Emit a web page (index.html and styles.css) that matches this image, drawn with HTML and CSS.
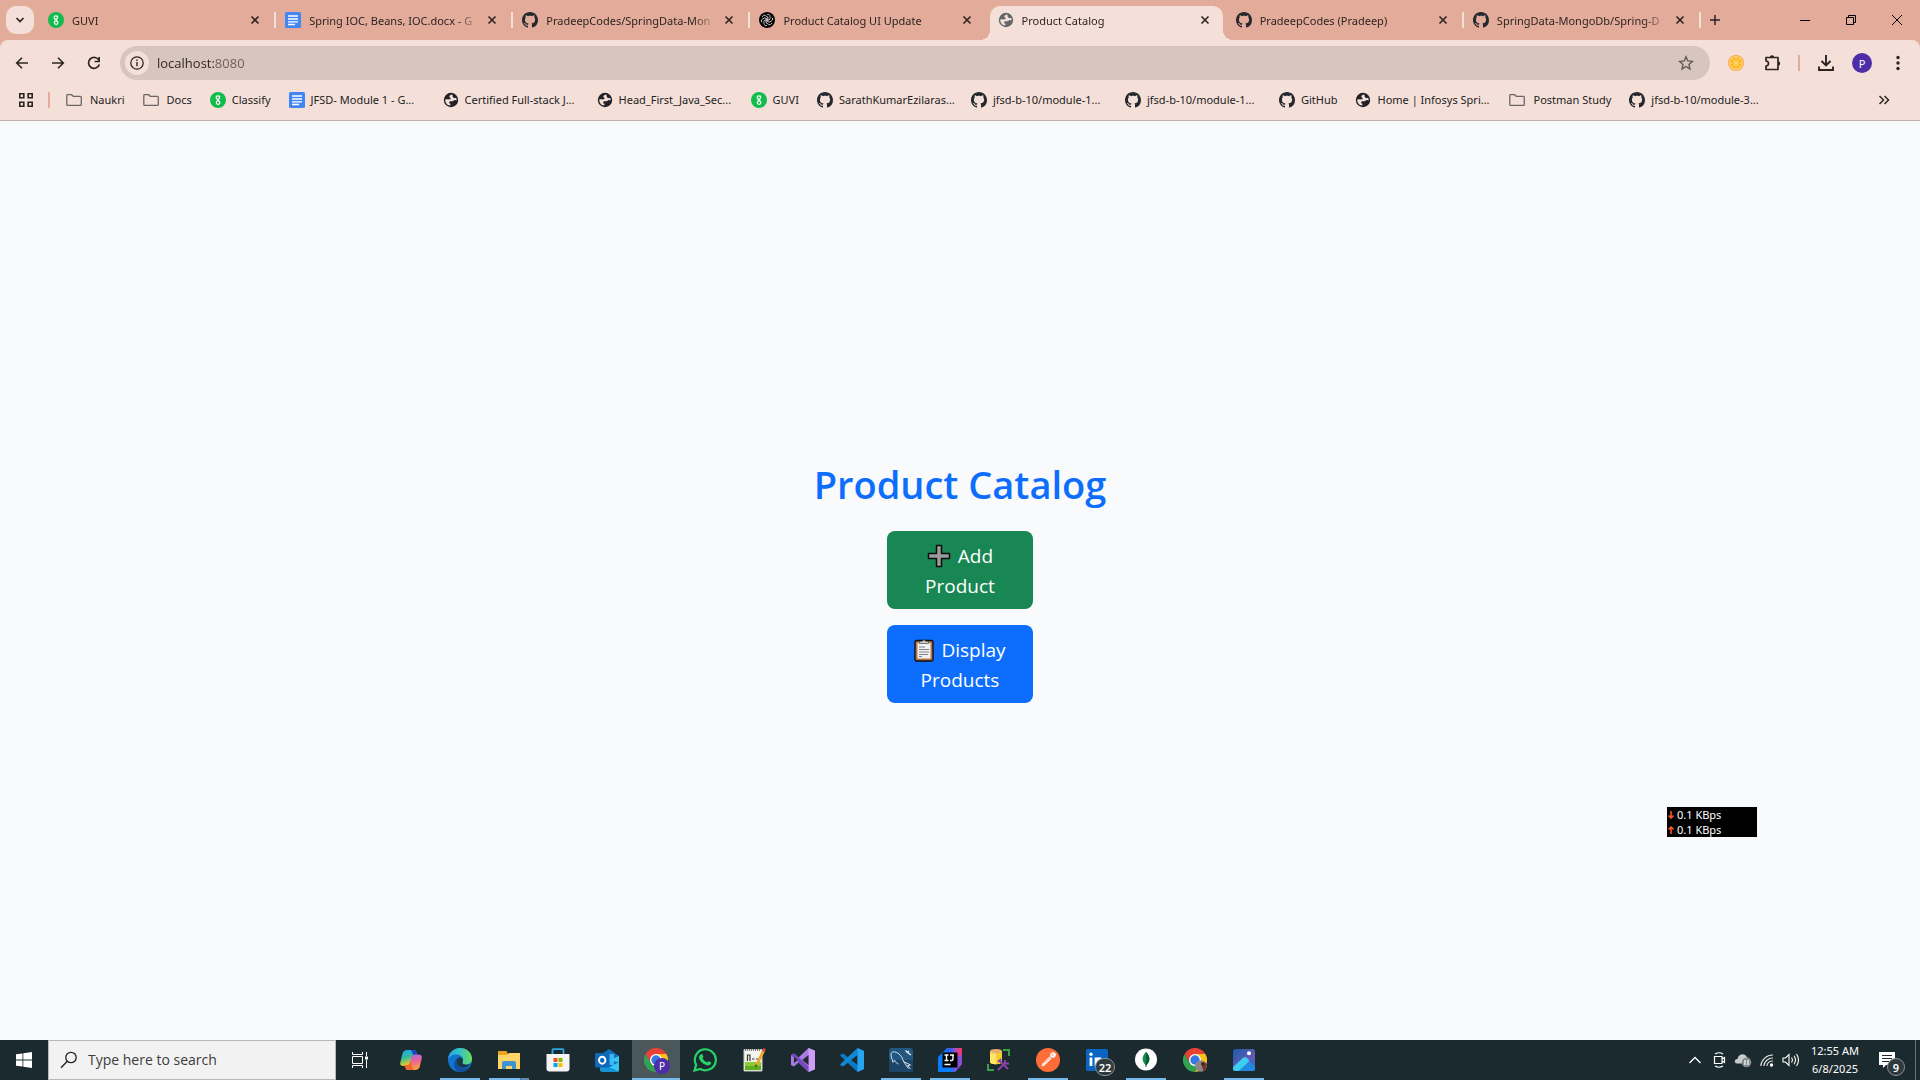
FILE: index.html
```html
<!DOCTYPE html>
<html lang="en">
<head>
<meta charset="utf-8">
<title>Product Catalog</title>
<link rel="stylesheet" href="styles.css">
</head>
<body>
<svg class="sprite" aria-hidden="true">
  <symbol id="guvi" viewBox="0 0 16 16"><circle cx="8" cy="8" r="8" fill="#11bb4c"/><g fill="none" stroke="#fff" stroke-width="1.2"><circle cx="7.8" cy="5.6" r="1.7"/><circle cx="8.1" cy="10.6" r="1.8"/><path d="M9.2 4.6l1.1-.7M7.2 7.2L9 8.9"/></g></symbol>
  <symbol id="doc" viewBox="0 0 16 16"><rect width="16" height="16" rx="1.5" fill="#4285f4"/><path d="M3 4h10M3 7h10M3 9.900h10M3 12.500h7" stroke="#fff" stroke-width="1.400"/></symbol>
  <symbol id="github" viewBox="0 0 16 16"><path fill="#24292f" d="M8 0C3.58 0 0 3.58 0 8c0 3.54 2.29 6.53 5.47 7.59.4.07.55-.17.55-.38 0-.19-.01-.82-.01-1.49-2.01.37-2.53-.49-2.69-.94-.09-.23-.48-.94-.82-1.130-.28-.15-.68-.52-.01-.53.63-.01 1.08.58 1.230.82.72 1.210 1.870.87 2.330.66.07-.52.28-.87.51-1.070-1.780-.2-3.640-.89-3.640-3.950 0-.87.31-1.590.82-2.150-.08-.2-.36-1.020.08-2.120 0 0 .67-.21 2.200.82.64-.18 1.320-.27 2-.27s1.360.09 2 .27c1.530-1.040 2.200-.82 2.200-.82.44 1.100.16 1.920.08 2.120.51.56.82 1.270.82 2.150 0 3.070-1.870 3.750-3.650 3.950.29.25.54.73.54 1.480 0 1.070-.01 1.930-.01 2.200 0 .21.15.46.55.38A8.010 8.010 0 0 0 16 8c0-4.420-3.580-8-8-8z"/></symbol>
  <symbol id="globe" viewBox="0 0 16 16"><circle cx="8" cy="8" r="7.200" fill="currentColor"/><path class="land" d="M9.500 2.400c-2 .3-3.300 1.200-3.200 2.300.1.900 1 .8 1.300 1.500.3.800-.7 1.200-1.800 1.200-1.400 0-2.800-.4-3.500.3-.2 3.100 2 5.500 5 5.800l.2-1.700c-1.200-.3-1.600-1-1.200-1.900.5-.8 1.900-.5 2.900-.6 1.200-.1 1.400-1.300 2.600-1.400.8-.1 1.400.3 2 .3-.1-.9-.4-1.700-.8-2.400-.8.500-2 .5-2.700-.2-.7-.8-.8-2-.8-3.200z"/></symbol>
  <symbol id="openai" viewBox="0 0 16 16"><circle cx="8" cy="8" r="8" fill="#000"/><g fill="none" stroke="#fff" stroke-width=".7"><path d="M8 2.600a2 2 0 0 1 3 1.700v3L8 9"/><path d="M8 2.600a2 2 0 0 1 3 1.700v3L8 9" transform="rotate(60 8 8)"/><path d="M8 2.600a2 2 0 0 1 3 1.700v3L8 9" transform="rotate(120 8 8)"/><path d="M8 2.600a2 2 0 0 1 3 1.700v3L8 9" transform="rotate(180 8 8)"/><path d="M8 2.600a2 2 0 0 1 3 1.700v3L8 9" transform="rotate(240 8 8)"/><path d="M8 2.600a2 2 0 0 1 3 1.700v3L8 9" transform="rotate(300 8 8)"/></g></symbol>
  <symbol id="folder" viewBox="0 0 16 16"><path d="M.8 3.500q0-.8.8-.8h4l1.700 1.600h7.100q.9 0 .9.900v7.200q0 .9-.9.900H1.700q-.9 0-.9-.9z" fill="none" stroke="#6b6664" stroke-width="1.300"/></symbol>
  <symbol id="close" viewBox="0 0 10 10"><path d="M1.500 1.500l7 7m0-7l-7 7" stroke="#2d2422" stroke-width="1.600"/></symbol>
  <symbol id="chrome" viewBox="0 0 24 24"><path d="M12 12V6h10.400A12 12 0 0 1 12 24l5.200-9z" fill="#fbc116"/><path d="M12 12l5.200 3L12 24A12 12 0 0 1 1.600 6l5.200 9z" fill="#31a350"/><path d="M1.600 6A12 12 0 0 1 22.400 6H12L6.800 15z" fill="#e94235"/><circle cx="12" cy="12" r="6" fill="#fff"/><circle cx="12" cy="12" r="4.700" fill="#3478e5"/></symbol>
</svg>

<header class="browser">
  <div class="tab-strip">
    <button class="tab-search" aria-label="Search tabs"><svg width="10" height="10" viewBox="0 0 10 10"><path d="M1.500 3L5 6.500 8.500 3" fill="none" stroke="#2d2422" stroke-width="1.700"/></svg></button>
    <nav class="tabs" aria-label="Open tabs">
      <div class="tab"><svg class="icon"><use href="#guvi"/></svg><a href="#" class="tab-title">GUVI</a><button class="tab-close" aria-label="Close tab"><svg><use href="#close"/></svg></button></div>
      <div class="tab"><svg class="icon"><use href="#doc"/></svg><a href="#" class="tab-title">Spring IOC, Beans, IOC.docx - G</a><button class="tab-close" aria-label="Close tab"><svg><use href="#close"/></svg></button></div>
      <div class="tab"><svg class="icon"><use href="#github"/></svg><a href="#" class="tab-title">PradeepCodes/SpringData-Mon</a><button class="tab-close" aria-label="Close tab"><svg><use href="#close"/></svg></button></div>
      <div class="tab plain"><svg class="icon"><use href="#openai"/></svg><a href="#" class="tab-title">Product Catalog UI Update</a><button class="tab-close" aria-label="Close tab"><svg><use href="#close"/></svg></button></div>
      <div class="tab active"><svg class="icon muted"><use href="#globe"/></svg><a href="#" class="tab-title">Product Catalog</a><button class="tab-close" aria-label="Close tab"><svg><use href="#close"/></svg></button></div>
      <div class="tab"><svg class="icon"><use href="#github"/></svg><a href="#" class="tab-title">PradeepCodes (Pradeep)</a><button class="tab-close" aria-label="Close tab"><svg><use href="#close"/></svg></button></div>
      <div class="tab"><svg class="icon"><use href="#github"/></svg><a href="#" class="tab-title">SpringData-MongoDb/Spring-D</a><button class="tab-close" aria-label="Close tab"><svg><use href="#close"/></svg></button></div>
    </nav>
    <button class="new-tab" aria-label="New tab"><svg width="12" height="12" viewBox="0 0 12 12"><path d="M6 1v10M1 6h10" stroke="#2d2422" stroke-width="1.500"/></svg></button>
    <div class="window-controls">
      <button aria-label="Minimize"><svg width="10" height="10" viewBox="0 0 10 10"><path d="M0 5.500h10" stroke="#000"/></svg></button>
      <button aria-label="Restore"><svg width="10" height="10" viewBox="0 0 10 10"><path d="M.5 2.500h7v7h-7zM2.500 2.500v-2h7v7h-2" fill="none" stroke="#000"/></svg></button>
      <button aria-label="Close"><svg width="10" height="10" viewBox="0 0 10 10"><path d="M0 0l10 10M10 0L0 10" stroke="#000"/></svg></button>
    </div>
  </div>

  <div class="toolbar">
    <button class="tool" aria-label="Back"><svg viewBox="0 0 16 16"><path d="M14 8H3M8 2.700L2.700 8 8 13.300" fill="none" stroke="#2d2422" stroke-width="1.600"/></svg></button>
    <button class="tool" aria-label="Forward"><svg viewBox="0 0 16 16"><path d="M2 8h11M8 2.700L13.300 8 8 13.300" fill="none" stroke="#2d2422" stroke-width="1.600"/></svg></button>
    <button class="tool" aria-label="Reload"><svg viewBox="0 0 16 16"><path d="M13 5.500A5.500 5.500 0 1 0 13.300 9.500" fill="none" stroke="#2d2422" stroke-width="1.700"/><path d="M13.100 2v4.500H8.600" fill="none" stroke="#2d2422" stroke-width="1.700"/></svg></button>
    <div class="omnibox">
      <button class="site-info" aria-label="Site information"><svg width="14" height="14" viewBox="0 0 14 14"><circle cx="7" cy="7" r="6.200" fill="none" stroke="#2d2422" stroke-width="1.300"/><path d="M7 6v4.300M7 3.500v1.500" stroke="#2d2422" stroke-width="1.400"/></svg></button>
      <input class="address" type="text" value="localhost:8080" aria-label="Address">
      <button class="star" aria-label="Bookmark this tab"><svg width="16" height="16" viewBox="0 0 16 16"><path d="M8 1.700l1.800 4.300 4.700.4-3.600 3 1.100 4.600L8 11.500 4 14l1.100-4.600-3.600-3L6.200 6z" fill="none" stroke="#5f5653" stroke-width="1.300"/></svg></button>
    </div>
    <div class="actions">
      <button aria-label="Extension"><svg width="16" height="16" viewBox="0 0 16 16"><circle cx="8" cy="8" r="8" fill="#f7a83c"/><circle cx="8" cy="8" r="7" fill="#ffd98a"/><circle cx="8" cy="8" r="6" fill="#ffb51f"/><path d="M8 2v12M2 8h12M3.800 3.800l8.400 8.400M12.200 3.800l-8.400 8.400" stroke="#ffdf8d" stroke-width=".8"/></svg></button>
      <button aria-label="Extensions"><svg width="18" height="18" viewBox="0 0 18 18"><path d="M3 3.500h12v12H3v-3.500q2.500-.3 2.500-2.500T3 7z" fill="none" stroke="#2d2422" stroke-width="1.700" stroke-linejoin="round"/><path d="M6.800 3.500a2.200 2.200 0 0 1 4.400 0zM15 7.300a2.200 2.200 0 0 1 0 4.400z" fill="#2d2422"/></svg></button>
      <span class="divider"></span>
      <button aria-label="Downloads"><svg width="18" height="18" viewBox="0 0 18 18"><path d="M9 1v10M4.500 7L9 11.500 13.500 7M2 12.500V16h14v-3.500" fill="none" stroke="#2d2422" stroke-width="1.900"/></svg></button>
      <button class="avatar" aria-label="Profile">P</button>
      <button aria-label="Menu"><svg width="16" height="16" viewBox="0 0 16 16" fill="#2d2422"><circle cx="8" cy="2.500" r="1.700"/><circle cx="8" cy="8" r="1.700"/><circle cx="8" cy="13.500" r="1.700"/></svg></button>
    </div>
  </div>

  <nav class="bookmarks" aria-label="Bookmarks">
    <button class="apps" aria-label="Apps"><svg width="14" height="14" viewBox="0 0 14 14"><path d="M.8.800h4v4h-4zM9.200.800h4v4h-4zM.8 9.200h4v4h-4zM9.200 9.200h4v4h-4z" fill="none" stroke="#2d2422" stroke-width="1.600"/></svg></button>
    <span class="divider"></span>
    <a href="#" class="bm dir"><svg class="icon"><use href="#folder"/></svg><span>Naukri</span></a>
    <a href="#" class="bm dir"><svg class="icon"><use href="#folder"/></svg><span>Docs</span></a>
    <a href="#" class="bm"><svg class="icon"><use href="#guvi"/></svg><span>Classify</span></a>
    <a href="#" class="bm long"><svg class="icon"><use href="#doc"/></svg><span>JFSD- Module 1 - G...</span></a>
    <a href="#" class="bm long"><svg class="icon"><use href="#globe"/></svg><span>Certified Full-stack J...</span></a>
    <a href="#" class="bm long"><svg class="icon"><use href="#globe"/></svg><span>Head_First_Java_Sec...</span></a>
    <a href="#" class="bm"><svg class="icon"><use href="#guvi"/></svg><span>GUVI</span></a>
    <a href="#" class="bm long"><svg class="icon"><use href="#github"/></svg><span>SarathKumarEzilaras...</span></a>
    <a href="#" class="bm long"><svg class="icon"><use href="#github"/></svg><span>jfsd-b-10/module-1...</span></a>
    <a href="#" class="bm long"><svg class="icon"><use href="#github"/></svg><span>jfsd-b-10/module-1...</span></a>
    <a href="#" class="bm"><svg class="icon"><use href="#github"/></svg><span>GitHub</span></a>
    <a href="#" class="bm long"><svg class="icon"><use href="#globe"/></svg><span>Home | Infosys Spri...</span></a>
    <a href="#" class="bm dir"><svg class="icon"><use href="#folder"/></svg><span>Postman Study</span></a>
    <a href="#" class="bm long"><svg class="icon"><use href="#github"/></svg><span>jfsd-b-10/module-3...</span></a>
    <button class="more" aria-label="More bookmarks"><svg width="12" height="10" viewBox="0 0 12 10"><path d="M1.500 1l4 4-4 4M6.500 1l4 4-4 4" fill="none" stroke="#2d2422" stroke-width="1.500"/></svg></button>
  </nav>
</header>

<main class="page">
  <h1>Product Catalog</h1>
  <div class="page-actions">
    <button class="btn green"><svg width="24" height="24" viewBox="0 0 24 24"><path d="M9.500 1.500h5v8h8v5h-8v8h-5v-8h-8v-5h8z" fill="#9b9b9f" stroke="#0b0b0b" stroke-width="1.500" stroke-linejoin="round"/></svg> Add Product</button>
    <button class="btn blue"><svg width="20" height="24" viewBox="0 0 20 24"><rect x="1" y="2.500" width="18" height="20.500" rx="1.500" fill="#b5754b" stroke="#0b0b0b" stroke-width="1.300"/><path d="M3.500 5h13v15.500h-13z" fill="#f1f1f1"/><path d="M5.500 5.500V3.300h2.800a1.800 1.800 0 0 1 3.400 0h2.800v2.200z" fill="#ccc" stroke="#333" stroke-width=".6"/><path d="M5 9h6M5 11.500h10M5 14h10M5 16.500h9M5 18.500h3" stroke="#777" stroke-width=".9"/></svg> Display Products</button>
  </div>
</main>

<aside class="net-meter" aria-label="Network speed">
  <div><svg width="6" height="8" viewBox="0 0 6 8"><path d="M3 0v6M.5 4.500L3 7l2.500-2.500" fill="none" stroke="#f0502a" stroke-width="1.700"/></svg>0.1 KBps</div>
  <div><svg width="6" height="8" viewBox="0 0 6 8"><path d="M3 8V2M.5 3.500L3 1l2.500 2.500" fill="none" stroke="#f0502a" stroke-width="1.700"/></svg>0.1 KBps</div>
</aside>

<footer class="taskbar">
  <button class="start" aria-label="Start"><svg width="16" height="16" viewBox="0 0 16 16" fill="#fff"><path d="M0 2.300L6.500 1.400v6.200H0zM7.300 1.300L16 0v7.600H7.300zM0 8.400h6.500v6.200L0 13.700zM7.300 8.400H16V16l-8.700-1.300z"/></svg></button>
  <div class="search">
    <svg width="18" height="18" viewBox="0 0 18 18"><circle cx="11" cy="6.500" r="5.200" fill="none" stroke="#222" stroke-width="1.300"/><path d="M7.300 10.300L1 16.700" stroke="#222" stroke-width="1.400"/></svg>
    <input type="text" placeholder="Type here to search" aria-label="Type here to search">
  </div>
  <div class="apps-row">
    <button class="app view" aria-label="Task view"><svg width="16" height="16" viewBox="0 0 16 16"><path d="M.5 4.500h10v7H.5zM.5 0v2.500h10V0M.5 16v-2.500h10V16M14.500 0v4M14.500 8v8" fill="none" stroke="#fff"/><path d="M13 4.500h3v3h-3z" fill="#fff"/></svg></button>
    <button class="app" aria-label="Copilot"><svg width="24" height="24" viewBox="0 0 24 24"><defs><linearGradient id="c1" x2=".3" y2="1"><stop stop-color="#1aa4f3"/><stop offset=".5" stop-color="#32b9a0"/><stop offset="1" stop-color="#f5cf18"/></linearGradient><linearGradient id="c2" x2=".2" y2="1"><stop stop-color="#a567f2"/><stop offset=".55" stop-color="#f0658f"/><stop offset="1" stop-color="#ff9d45"/></linearGradient></defs><path d="M8 2h7q2 0 2.700 2.500l.8 3h-3.300q-1.700 0-2.300 2l-1.700 6q-.7 2.500-3 2.500H4.500Q.5 18 1.300 14.500l2.200-9Q4.500 2 8 2z" fill="url(#c1)"/><path d="M12 2h3q2 0 2.700 2.500l.8 3h-4z" fill="#1747c4"/><path d="M16 22H9q-2 0-2.700-2.500l-.8-2.500h3q1.700 0 2.300-2l1.700-6q.7-2.500 3-2.500h4q4 0 3.200 4l-2 8.500Q19.500 22 16 22z" fill="url(#c2)"/><path d="M5.500 17h3q1.700 0 2.300-2l.7-2L14 22H9q-2 0-2.700-2.500z" fill="#f5642c"/></svg></button>
    <button class="app open" aria-label="Edge"><svg width="24" height="24" viewBox="0 0 24 24"><defs><linearGradient id="e1" x2="1"><stop stop-color="#27a5e6"/><stop offset=".5" stop-color="#36c2c5"/><stop offset="1" stop-color="#69de58"/></linearGradient></defs><circle cx="12" cy="12" r="12" fill="#1074cf"/><path d="M0 11C1 4 6 0 12 0c7 0 12 5 12 10.500 0 4-3 6-6.500 6-2.500 0-3.500-1-3.500-2 0-.8.800-1.300.8-2.700C14.800 8.500 12 6.500 8.500 6.500 4.500 6.500 1.500 8.500 0 11z" fill="url(#e1)"/><path d="M9.500 10C7.500 15 11 20 16.500 20c2 0 3.600-.5 5-1.300A12 12 0 0 1 11 24C6 22.500 4 14 9.500 10z" fill="#154f9b"/><path d="M14.500 14.500c0-.8.700-1.500.3-3.500-1-1.500-3.800-1.800-5.300-.8-2 4 .2 8.500 5.500 9.300 3 .4 6-1 7.500-3.500-2.500 1-8 1.300-8-1.500z" fill="#1b3743"/></svg></button>
    <button class="app open grouped" aria-label="File Explorer"><svg width="24" height="24" viewBox="0 0 24 24"><path d="M1 3h8.500l1.500 3h11v6H1z" fill="#eba31d"/><path d="M1 7h9l2-2h11v16H1z" fill="#ffd568"/><path d="M5 21v-6q0-2 2-2h10q2 0 2 2v6h-4v-3H9v3z" fill="#3e93d1"/></svg></button>
    <button class="app" aria-label="Microsoft Store"><svg width="24" height="24" viewBox="0 0 24 24"><path d="M6.500 6V2q0-.8.800-.8h9.400q.8 0 .8.800v4" fill="none" stroke="#27a8e8" stroke-width="1.800"/><path d="M.5 6h23v14.500q0 3-3 3h-17q-3 0-3-3z" fill="#f4f4f4"/><path d="M7.500 10h4v4h-4z" fill="#f25022"/><path d="M12.500 10h4v4h-4z" fill="#7fba00"/><path d="M7.500 15h4v4h-4z" fill="#00a4ef"/><path d="M12.500 15h4v4h-4z" fill="#ffb900"/></svg></button>
    <button class="app" aria-label="Outlook"><svg width="24" height="24" viewBox="0 0 24 24"><path d="M5 7l9-6 10 7v14q0 1.500-1.500 1.500h-16Q5 23.500 5 22z" fill="#1170bd"/><path d="M7 6h12v11H7z" fill="#42b4f0"/><path d="M13 13l11-5v14q0 1.500-1.500 1.500h-16L24 14z" fill="#35c7f4"/><path d="M5 15l19 8.500H6.500Q5 23.500 5 22z" fill="#1793dd"/><rect y="5" width="14.500" height="14.500" rx="1" fill="#0f67b8"/><ellipse cx="7.200" cy="12.200" rx="3.200" ry="3.500" fill="none" stroke="#fff" stroke-width="1.900"/></svg></button>
    <button class="app open current" aria-label="Chrome"><svg width="24" height="24"><use href="#chrome"/></svg><span class="profile">P</span></button>
    <button class="app" aria-label="WhatsApp"><svg width="24" height="24" viewBox="0 0 24 24"><path d="M1.500 22.500l1.600-5.700a10.500 10.500 0 1 1 4 4.100z" fill="none" stroke="#25d366" stroke-width="2.200"/><path d="M8 6.200c.6-.4 1.300-.3 1.600.5l.8 1.900c.1.500-1 1.300-.8 1.700 1 1.900 2.400 3.100 4.400 4 .5.200 1.200-1.300 1.700-1.100l2.100 1c.5.300.4 1.200 0 1.900-.7 1.200-2.500 1.700-4 1.200-3.500-1-6-3.200-7.500-6.300C5.500 9 6.500 7 8 6.200z" fill="#25d366"/></svg></button>
    <button class="app" aria-label="Notepad++"><svg width="24" height="24" viewBox="0 0 24 24"><path d="M2 1.500h18V23H2z" fill="#f4f6ee" stroke="#c8c8c0"/><path d="M3 14h16v8H3z" fill="#8ccb37"/><path d="M3 18h16v4H3z" fill="#5fae1c"/><path d="M5.500 13V7h2.500v6M10 11h2.500M14 11h3" fill="none" stroke="#333" stroke-width="1.200"/><path d="M3 2h16" stroke="#777" stroke-dasharray="1 1" stroke-width="2"/><path d="M22 2L14.500 17" stroke="#efa72c" stroke-width="2.800"/><path d="M13.300 19.500l.2-3.200 2.200 1.200z" fill="#4a3520"/><path d="M21.300 3.300L22.600.7" stroke="#d44b3a" stroke-width="2.800"/></svg></button>
    <button class="app" aria-label="Visual Studio"><svg width="24" height="24" viewBox="0 0 24 24"><path d="M17.500 0L24 2.800v18.400L17.500 24l-10-9.500L3 18.500l-3-1.600V7.100l3-1.600 4.500 4z" fill="#a87be3"/><path d="M17.500 0L24 2.800v18.400L17.500 24z" fill="#cf9cf7"/><path d="M3 5.500L17.500 18v6L0 7.100z" fill="#7848bd"/><path d="M3 8.800v6.400l3.500-3.200zM17.500 7v10L11.300 12z" fill="#1c2a2d"/></svg></button>
    <button class="app" aria-label="Visual Studio Code"><svg width="24" height="24" viewBox="0 0 24 24"><path d="M17.500 0L24 3v18l-6.500 3L2 9.500 0 7.500l2-1.800 2 .3L17.500 17z" fill="#0b79c4"/><path d="M17.500 7L3.800 18 2 18.300 0 16.500 17.500 0z" fill="#1089d5"/><path d="M17.500 0L24 3v18l-6.500 3z" fill="#26a5f0"/></svg></button>
    <button class="app open" aria-label="MySQL Workbench"><svg width="24" height="24" viewBox="0 0 24 24"><rect width="24" height="24" rx="2.500" fill="#23577f"/><path d="M0 12h24v9.500q0 2.500-2.500 2.500h-19Q0 24 0 21.500z" fill="#1c4568"/><path d="M3.500 14c.5-2-1.500-4-1.500-7s2-3.500 4-3c4 1 7 4 8.500 9.500l7 3.500-3 .5 3 3.500M14.500 13.500l5 7M3.500 14c1 .5 1.500-.5 2-2 1 2.500 2.500 3.500 4 4" fill="none" stroke="#d5e5f0" stroke-width="1"/><path d="M16.500 2.500l2 2 1.500-1.500M18.500 4.500l3.500 2.500" fill="none" stroke="#d5e5f0" stroke-width="1.500"/></svg></button>
    <button class="app open" aria-label="IntelliJ IDEA"><svg width="24" height="24" viewBox="0 0 24 24"><defs><linearGradient id="ij" x1="0" x2="1" y1="0" y2="0"><stop offset=".3" stop-color="#3b5df0"/><stop offset=".6" stop-color="#b54bb0"/><stop offset="1" stop-color="#fe315d"/></linearGradient></defs><path d="M9 0h15v16l-7 8H9z" fill="url(#ij)"/><path d="M24 7v9l-7 8H6L19 8z" fill="#6b57f0" opacity=".75"/><path d="M9 0L0 9v15h16l-4-7z" fill="#087cfa"/><path d="M4.500 4.500h15v15h-15z"/><path d="M6.500 7h4M8.500 7v5.500M6.500 12.500h4M12 7h4M15 7v3.500q0 2-1.500 2H12M6.500 16.500h6" stroke="#fff" stroke-width="1.400" fill="none"/></svg></button>
    <button class="app" aria-label="SQL tools"><svg width="24" height="24" viewBox="0 0 24 24"><path d="M16 2h6v6M1 16v6h6" fill="none" stroke="#39a245" stroke-width="2"/><path d="M3 3v11c0 3 12 3 12 0V3z" fill="#f5cf32"/><path d="M3 3v11c0 1.500 3 2.200 6 2.200V3z" fill="#ffe66b"/><ellipse cx="9" cy="3.200" rx="6" ry="2.300" fill="#e7b36b"/><path d="M11 22l8-8M12 12l9 9M11 14l3-3M18 12v3.500h4" stroke="#8b43ab" stroke-width="2" fill="none"/></svg></button>
    <button class="app open" aria-label="Postman"><svg width="24" height="24" viewBox="0 0 24 24"><circle cx="12" cy="12" r="12" fill="#ff6c37"/><path d="M5.500 18.500l1-3 7-7 2 2-7 7z" fill="#fff"/><circle cx="17" cy="7" r="2.800" fill="#fff"/><path d="M8 15.500l6-6M15.500 5.500l2 2.500" stroke="#ff6c37" stroke-width=".8"/></svg></button>
    <button class="app" aria-label="LinkedIn"><svg width="24" height="24" viewBox="0 0 24 24"><rect x="1" y="1" width="22" height="22" rx="1.500" fill="#0a66c2"/><path d="M6 9.500V18M11 18V9.500M11 13q.3-2.300 2.900-2.300 2.600 0 2.600 2.800V18" stroke="#fff" stroke-width="2.800" fill="none"/><circle cx="6" cy="6.300" r="1.700" fill="#fff"/></svg><span class="count">22</span></button>
    <button class="app open" aria-label="MongoDB Compass"><svg width="24" height="24" viewBox="0 0 24 24"><circle cx="12" cy="11.500" r="11" fill="#fff"/><path d="M12 4c5 5 4 10 0 13.500C8 14 7 9 12 4z" fill="#118d4d"/><path d="M12 4c5 5 4 10 0 13.500z" fill="#0a5c39"/><path d="M12 15v4" stroke="#0a5c39"/></svg></button>
    <button class="app" aria-label="Chrome profile"><svg width="24" height="24"><use href="#chrome"/><circle cx="18" cy="18" r="5.800" fill="#8b8886"/><path d="M18 15q3-2 5.500 1v4.500l-3 2.800z" fill="#7e332a"/><circle cx="20" cy="16" r="1.800" fill="#3d2822"/></svg></button>
    <button class="app open" aria-label="Photos"><svg width="24" height="24" viewBox="0 0 24 24"><defs><linearGradient id="ph" x2="1" y2="1"><stop stop-color="#1c5ba7"/><stop offset=".6" stop-color="#615bb7"/><stop offset="1" stop-color="#2870c8"/></linearGradient></defs><rect x="1" y="1" width="22" height="22" rx="2.500" fill="url(#ph)"/><path d="M6 23l6-12q1.500-1.500 3 0l8 8v1.500q0 2.500-2.500 2.500z" fill="#2189e0"/><path d="M1 19l10.500-9.500q1.500-1.200 3 0l2 2q1 1.300 0 2.500L6.500 23h-3Q1 23 1 20.500z" fill="#3ccdf0"/><circle cx="17" cy="5.200" r="2" fill="#fff"/></svg></button>
  </div>
  <div class="tray">
    <button aria-label="Show hidden icons"><svg width="12" height="8" viewBox="0 0 12 8"><path d="M.5 7L6 1.500 11.500 7" fill="none" stroke="#fff" stroke-width="1.300"/></svg></button>
    <button aria-label="Meet now"><svg width="14" height="16" viewBox="0 0 14 16"><path d="M2.500 4.500H10v7H2.500zM10 7l2.500-1.500v5L10 9M3 2q4-2.500 8 0M3 14q4 2.500 8 0" fill="none" stroke="#fff" stroke-width="1.200"/></svg></button>
    <button aria-label="OneDrive"><svg width="18" height="16" viewBox="0 0 18 16"><path d="M3 11.500C-.5 11 .5 6.500 3.500 7 4.500 1 11.500 1 13 5.500c3 0 4 3 2.500 6z" fill="#c9cccd"/><circle cx="12.500" cy="10.500" r="4.800" fill="#858b8d"/><path d="M11 8v5M14 8v5" stroke="#fff" stroke-width="1.200"/></svg></button>
    <button aria-label="Wi-Fi"><svg width="14" height="14" viewBox="0 0 14 14"><path d="M.8 13A12 12 0 0 1 13 2M3.800 13A9 9 0 0 1 13 5M6.800 13A6 6 0 0 1 13 8" fill="none" stroke="#dce2e3" stroke-width="1.200"/><circle cx="11.500" cy="12" r="1.700" fill="#fff"/></svg></button>
    <button aria-label="Volume"><svg width="18" height="14" viewBox="0 0 18 14"><path d="M1 5h2.500L7 1.500v11L3.500 9H1zM9.500 4.500q1.800 2.500 0 5M12 2.800q3 4.200 0 8.400M14.500 1q4 6 0 12" fill="none" stroke="#fff" stroke-width="1.100"/></svg></button>
    <button class="clock"><span>12:55 AM</span><span>6/8/2025</span></button>
    <button class="notify" aria-label="Notifications"><svg width="16" height="16" viewBox="0 0 16 16"><path d="M0 0h16v13H7l-3 3v-3H0z" fill="#fff"/><path d="M3 3.500h10M3 6.500h10M3 9.500h7" stroke="#1b2a2e"/></svg><span class="count round">9</span></button>
    <button class="show-desktop" aria-label="Show desktop"></button>
  </div>
</footer>
</body>
</html>
```
FILE: styles.css
```css
* { box-sizing: border-box; }

body {
  margin: 0;
  min-height: 100vh;
  display: flex;
  flex-direction: column;
  position: relative;
  font-family: "Noto Sans", "Open Sans", sans-serif;
  font-size: 11px;
  color: #2d2422;
  background: #f8fafc;
}

button, input {
  font: inherit;
  color: inherit;
  border: 0;
  padding: 0;
  margin: 0;
  background: none;
}

button { display: flex; align-items: center; justify-content: center; flex: none; }
input { outline: none; min-width: 0; }
a { color: inherit; text-decoration: none; }
svg { flex: none; }
.sprite { display: none; }
.icon { width: 16px; height: 16px; }

/* Tab strip */
.browser { background: #e3ab9a; }
.tab-strip { display: flex; align-items: center; height: 40px; padding-left: 6px; }
.tab-search { width: 28px; height: 28px; border-radius: 10px; background: #f5e0d9; margin-right: 4px; }
.tabs { display: flex; flex: 1; align-self: stretch; }
.tab {
  flex: 1;
  min-width: 0;
  display: flex;
  align-items: center;
  margin: 0 3px;
  padding: 0 7px;
  position: relative;
}
.tab::after {
  content: "";
  position: absolute;
  right: -4px;
  top: 12px;
  width: 2px;
  height: 16px;
  background: #f5e0d9;
}
.tab.plain::after { display: none; }
.tab-title {
  flex: 1;
  min-width: 0;
  margin: 2px 3px 0 8px;
  line-height: 16px;
  white-space: nowrap;
  overflow: hidden;
  mask-image: linear-gradient(to left, transparent, #000 24px);
}
.tab-close { width: 18px; height: 18px; margin-right: 1px; }
.tab-close svg { width: 10px; height: 10px; }
.tab.active {
  margin-top: 6px;
  padding: 0 8px 6px;
  background: #f5e0d9;
  border-radius: 10px 10px 0 0;
}
.tab.active::before, .tab.active::after {
  content: "";
  position: absolute;
  top: auto;
  bottom: 0;
  width: 10px;
  height: 10px;
}
.tab.active::before { left: -10px; right: auto; background: radial-gradient(circle at 0 0, transparent 10px, #f5e0d9 10px); }
.tab.active::after { right: -10px; background: radial-gradient(circle at 100% 0, transparent 10px, #f5e0d9 10px); }
.land { fill: #f5e0d9; }
.muted { color: #62676b; }
.new-tab { width: 30px; height: 30px; }
.window-controls { display: flex; align-self: stretch; margin-left: 52px; }
.window-controls button { width: 46px; }

/* Toolbar */
.toolbar {
  display: flex;
  align-items: center;
  height: 46px;
  padding: 0 4px;
  background: #f5e0d9;
  border-radius: 8px 8px 0 0;
}
.tool { width: 36px; height: 36px; }
.tool svg { width: 16px; height: 16px; }
.omnibox {
  flex: 1;
  display: flex;
  align-items: center;
  height: 34px;
  margin-left: 8px;
  padding: 0 16px 0 5px;
  border-radius: 17px;
  background: #d7c5be;
}
.site-info { width: 24px; height: 24px; border-radius: 12px; background: #f5e0d9; }
.address {
  flex: 1;
  margin-left: 8px;
  font-family: "Open Sans", sans-serif;
  font-size: 13px;
  line-height: 20px;
  color: transparent;
  background: linear-gradient(to right, #2d2422 58px, #6b605c 58px);
  background-clip: text;
}
.actions { display: flex; align-items: center; margin-left: 8px; }
.actions button { width: 36px; height: 36px; }
.divider { width: 2px; height: 16px; background: #e3ab9a; }
.actions .divider { margin: 0 8px; }
.actions .avatar {
  width: 20px;
  height: 20px;
  margin: 0 8px;
  border-radius: 10px;
  background: #4f2da8;
  color: #fff;
}

/* Bookmarks */
.bookmarks {
  display: flex;
  align-items: center;
  height: 35px;
  padding: 0 28px 6px 19px;
  background: #f5e0d9;
  border-bottom: 1px solid #beb1ac;
  line-height: 16px;
  white-space: nowrap;
}
.bookmarks .divider { margin: 0 16px 0 15px; }
.bm { display: flex; align-items: center; gap: 6px; padding-right: 18px; flex: none; color: #222; }
.bm.dir { gap: 8px; }
.bm.long { width: 154px; }
.bm .icon { color: #202124; }
.more { margin-left: auto; width: 16px; height: 16px; }

/* Page */
.page {
  flex: 1;
  display: flex;
  flex-direction: column;
  align-items: center;
  justify-content: center;
  background: #f8fafc;
  font-family: "Open Sans", sans-serif;
}
.page h1 {
  margin: 0 0 22px;
  font-size: 38px;
  line-height: 50px;
  font-weight: 600;
  color: #0d6efd;
}
.page-actions { display: flex; flex-direction: column; gap: 16px; width: 146px; }
.btn {
  display: block;
  padding: 10px 16px 8px;
  border-radius: 8px;
  font-size: 19px;
  line-height: 30px;
  color: #fff;
  text-align: center;
}
.btn svg { vertical-align: -5px; margin-right: 2px; }
.green { background: #198754; }
.blue { background: #0d6efd; }

.net-meter {
  position: absolute;
  top: 807px;
  right: 163px;
  width: 90px;
  padding-left: 1px;
  background: #000;
  color: #fff;
  line-height: 15px;
}
.net-meter svg { margin-right: 3px; }

/* Taskbar */
.taskbar { display: flex; height: 40px; background: #1b2a2e; color: #fff; }
.start { width: 48px; }
.search {
  display: flex;
  align-items: center;
  gap: 10px;
  width: 288px;
  padding: 0 11px;
  border: 1px solid #b9b9b9;
  background: #f2f2f2;
}
.search input { flex: 1; font-family: "Open Sans", sans-serif; font-size: 14px; line-height: 20px; }
.search input::placeholder { color: #3c3c3c; opacity: 1; }
.apps-row { display: flex; gap: 1px; }
.app { width: 48px; position: relative; }
.view { margin-right: 2px; }
.open::after {
  content: "";
  position: absolute;
  left: 4px;
  right: 4px;
  bottom: 0;
  height: 2px;
  background: #76b9ed;
}
.grouped::after { background: linear-gradient(to right, #76b9ed 31px, #45718e 31px, #5e8cb5 33px); }
.current { background: #4a575b; }
.current::after { left: 0; right: 0; }
.profile, .count {
  position: absolute;
  display: flex;
  align-items: center;
  justify-content: center;
  color: #fff;
}
.profile { left: 22px; top: 18px; width: 16px; height: 16px; border-radius: 8px; background: #4f2da8; font-size: 10px; }
.count {
  left: 22px;
  top: 18px;
  width: 20px;
  height: 18px;
  border: 1px solid #8b9294;
  border-radius: 9px;
  background: #303a3e;
  font-size: 11px;
  font-weight: 600;
}
.tray { display: flex; margin-left: auto; }
.tray button { width: 24px; }
.tray .clock { flex-direction: column; width: 64px; line-height: 18px; }
.tray .notify { width: 40px; position: relative; }
.notify .round { width: 18px; left: 20px; }
.tray .show-desktop { width: 5px; margin-left: 8px; border-left: 1px solid #6a7578; }
```
